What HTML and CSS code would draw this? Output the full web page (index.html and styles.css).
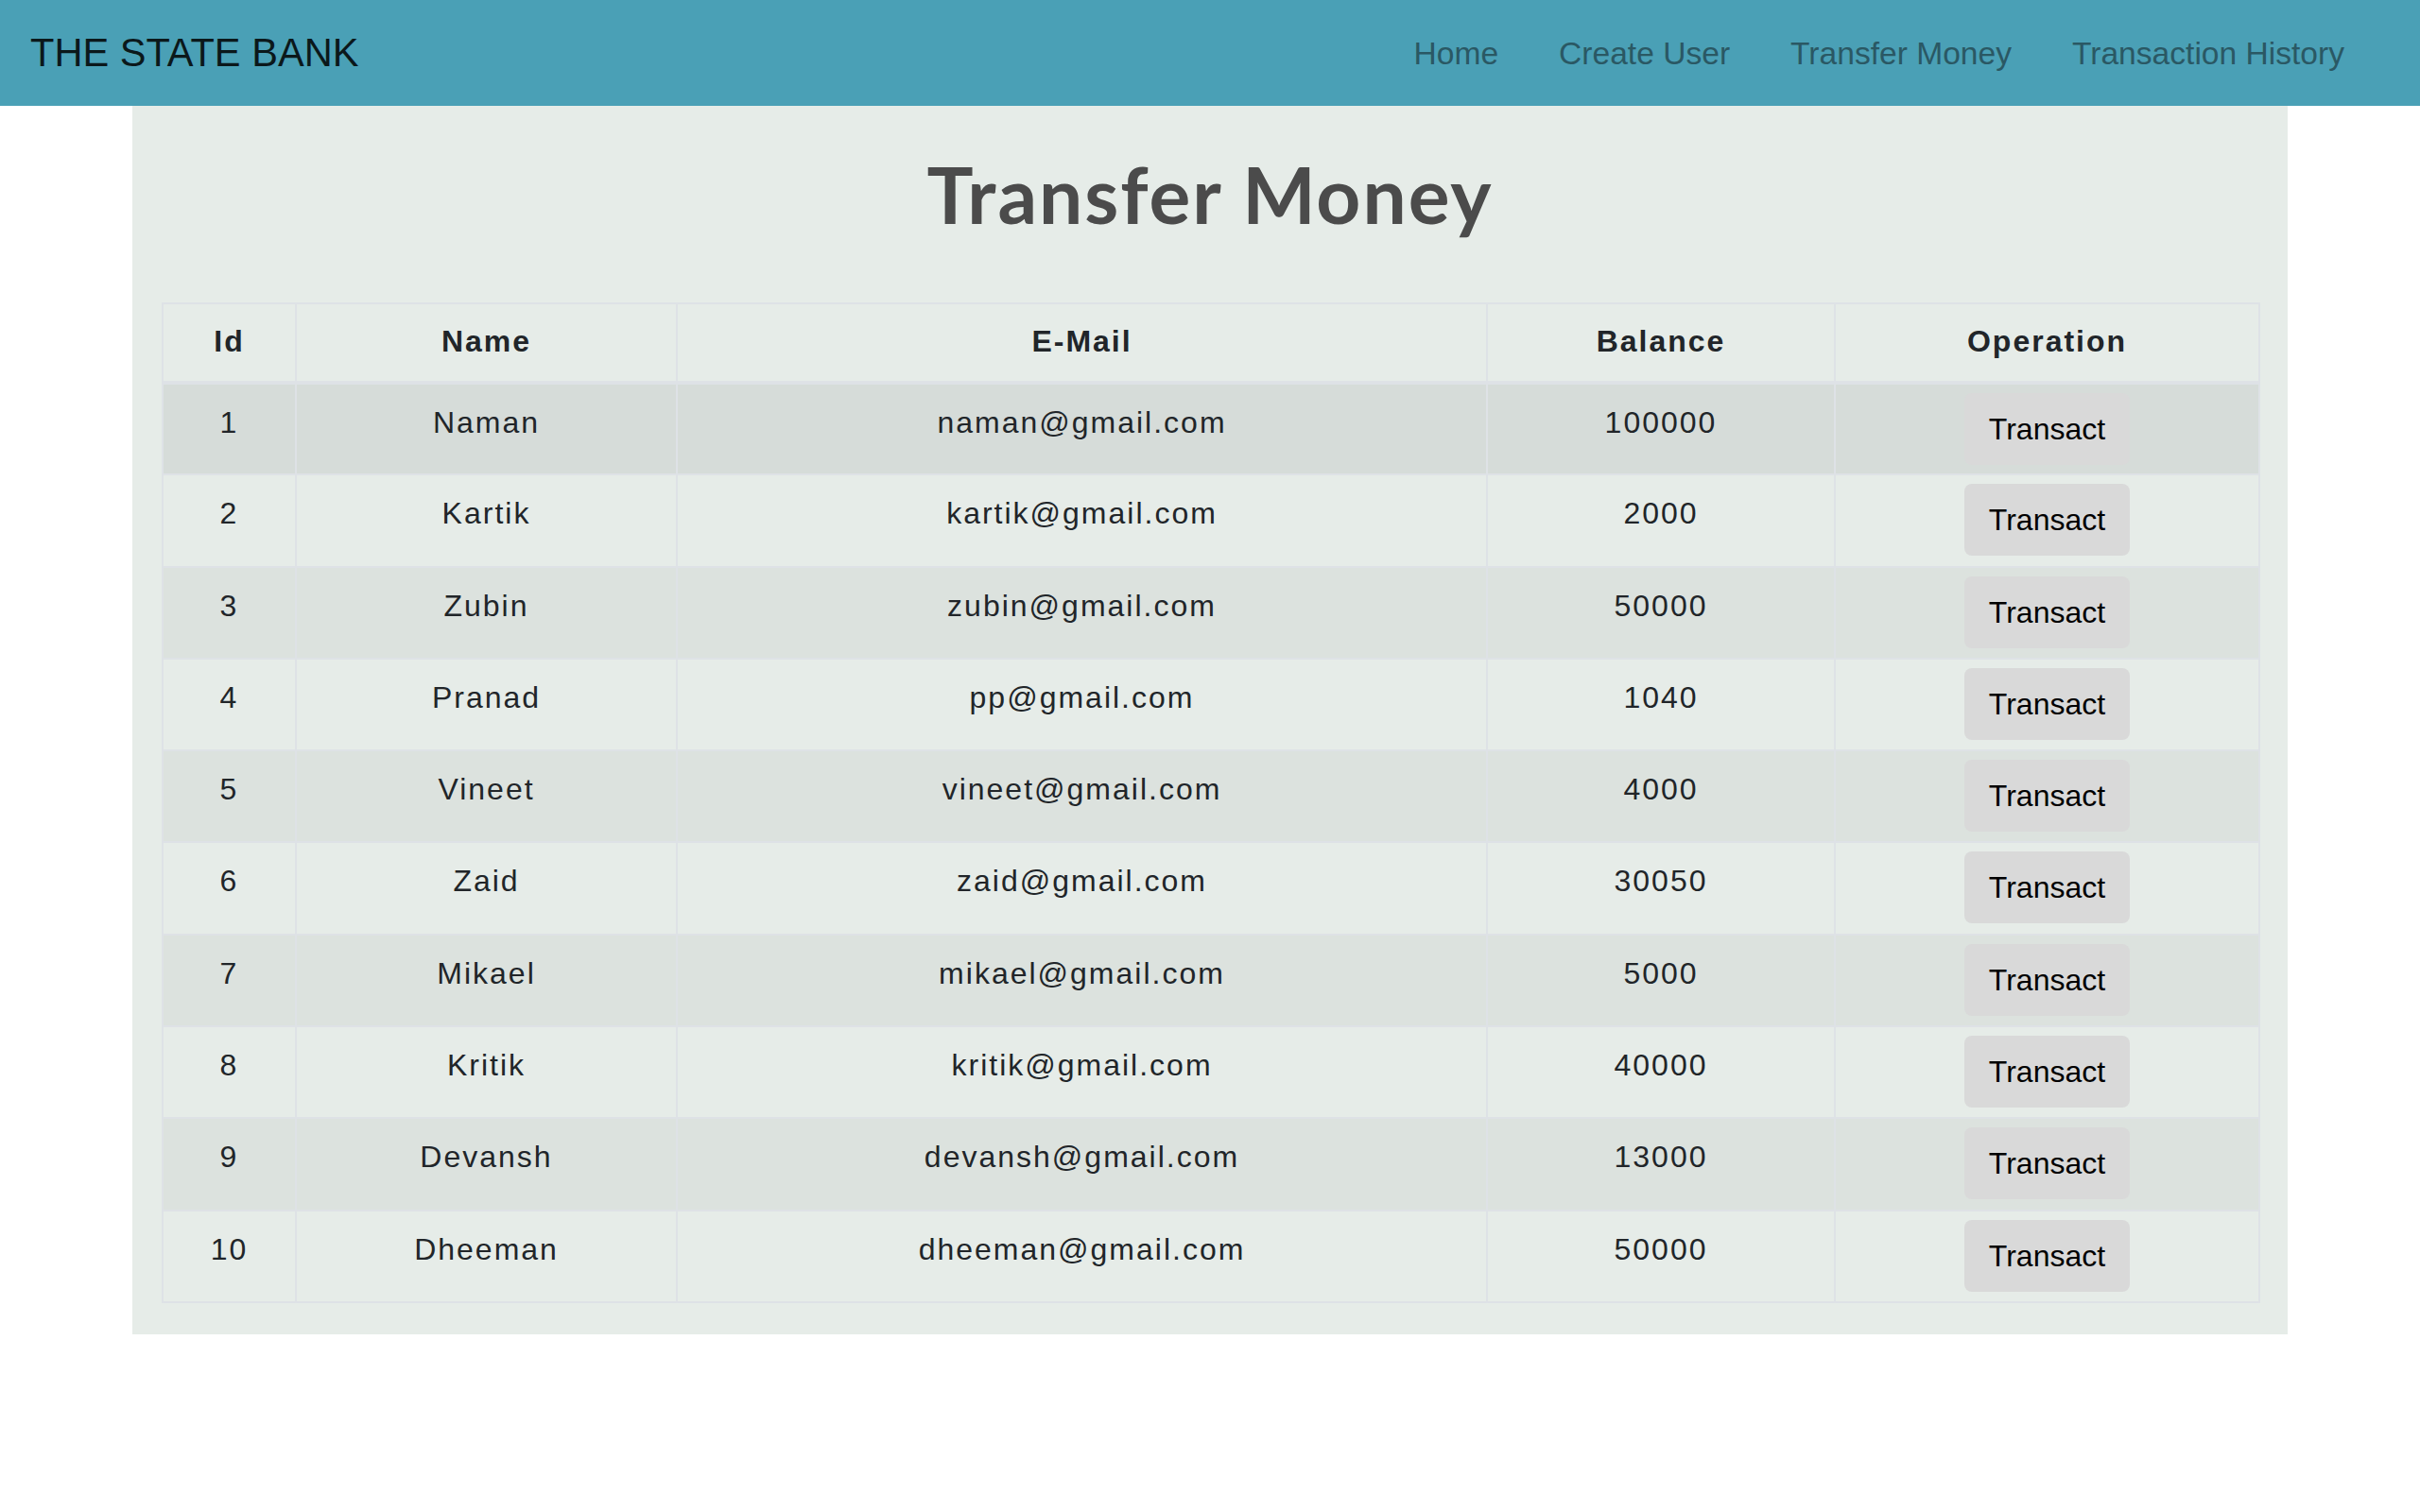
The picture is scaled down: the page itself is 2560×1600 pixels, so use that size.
FILE: index.html
```html
<!DOCTYPE html>
<html lang="en">
<head>
<meta charset="utf-8">
<title>Transfer Money</title>
<link rel="stylesheet" href="styles.css">
</head>
<body>
<nav class="navbar">
  <div class="brand">THE STATE BANK</div>
  <ul class="nav-links">
    <li><a href="#">Home</a></li>
    <li><a href="#">Create User</a></li>
    <li><a href="#">Transfer Money</a></li>
    <li><a href="#">Transaction History</a></li>
  </ul>
</nav>
<main class="container">
  <h1 class="title">Transfer Money</h1>
  <table class="users">
    <colgroup>
      <col class="c-id"><col class="c-name"><col class="c-mail"><col class="c-bal"><col class="c-op">
    </colgroup>
    <thead>
      <tr><th>Id</th><th>Name</th><th>E-Mail</th><th>Balance</th><th>Operation</th></tr>
    </thead>
    <tbody>
      <tr class="hover"><td>1</td><td>Naman</td><td>naman@gmail.com</td><td>100000</td><td class="op"><button class="btn">Transact</button></td></tr>
      <tr><td>2</td><td>Kartik</td><td>kartik@gmail.com</td><td>2000</td><td class="op"><button class="btn">Transact</button></td></tr>
      <tr><td>3</td><td>Zubin</td><td>zubin@gmail.com</td><td>50000</td><td class="op"><button class="btn">Transact</button></td></tr>
      <tr><td>4</td><td>Pranad</td><td>pp@gmail.com</td><td>1040</td><td class="op"><button class="btn">Transact</button></td></tr>
      <tr><td>5</td><td>Vineet</td><td>vineet@gmail.com</td><td>4000</td><td class="op"><button class="btn">Transact</button></td></tr>
      <tr><td>6</td><td>Zaid</td><td>zaid@gmail.com</td><td>30050</td><td class="op"><button class="btn">Transact</button></td></tr>
      <tr><td>7</td><td>Mikael</td><td>mikael@gmail.com</td><td>5000</td><td class="op"><button class="btn">Transact</button></td></tr>
      <tr><td>8</td><td>Kritik</td><td>kritik@gmail.com</td><td>40000</td><td class="op"><button class="btn">Transact</button></td></tr>
      <tr><td>9</td><td>Devansh</td><td>devansh@gmail.com</td><td>13000</td><td class="op"><button class="btn">Transact</button></td></tr>
      <tr><td>10</td><td>Dheeman</td><td>dheeman@gmail.com</td><td>50000</td><td class="op"><button class="btn">Transact</button></td></tr>
    </tbody>
  </table>
</main>
</body>
</html>
```
FILE: styles.css
```css
* { box-sizing: border-box; }
html, body { margin: 0; padding: 0; background: #ffffff; }
body { font-family: "Liberation Sans", Arial, Helvetica, sans-serif; }

.navbar {
  display: flex;
  align-items: center;
  justify-content: space-between;
  height: 112px;
  padding: 0 80px 0 32px;
  background: #4aa0b6;
}
.brand {
  font-size: 41.6px;
  color: #0b181b;
  line-height: 48px;
}
.nav-links {
  display: flex;
  gap: 64px;
  list-style: none;
  margin: 0;
  padding: 0;
}
.nav-links a {
  display: block;
  font-size: 33.6px;
  line-height: 40px;
  padding-top: 2px;
  color: #2a5864;
  text-decoration: none;
}

.container {
  width: 2280px;
  margin: 0 auto;
  padding: 44px 31px 33px;
  background: #e6ece8;
}
.title {
  margin: 0 0 66px;
  font-family: "Lato", "Open Sans", sans-serif;
  font-weight: 700;
  font-size: 82px;
  line-height: 98px;
  letter-spacing: 2px;
  color: #4b4b4b;
  text-align: center;
}

.users {
  width: 100%;
  table-layout: fixed;
  border-collapse: collapse;
  color: #212529;
  font-size: 32px;
  letter-spacing: 2px;
  text-align: center;
}
.c-id { width: 141px; }
.c-name { width: 403px; }
.c-mail { width: 857px; }
.c-bal { width: 368px; }
.c-op { width: 449px; }

.users th, .users td {
  border: 2px solid #dee2e6;
  vertical-align: top;
  line-height: 48px;
}
.users th {
  padding: 15px 12px 18px;
  font-weight: 700;
  border-bottom-width: 4px;
}
.users td {
  padding: 16px 12px 8px;
  height: 97.3px;
}
.users tbody tr:nth-child(odd) { background: #dce2de; }
.users tbody tr.hover { background: #d6dcd9; }

.users td.op { padding: 9px 12px 8px; }
.btn {
  font-family: "Liberation Sans", Arial, Helvetica, sans-serif;
  font-size: 32px;
  line-height: 38px;
  letter-spacing: 0;
  color: #000000;
  background: #d9d9d9;
  border: none;
  border-radius: 8px;
  padding: 19px 26px;
  cursor: pointer;
}
```
